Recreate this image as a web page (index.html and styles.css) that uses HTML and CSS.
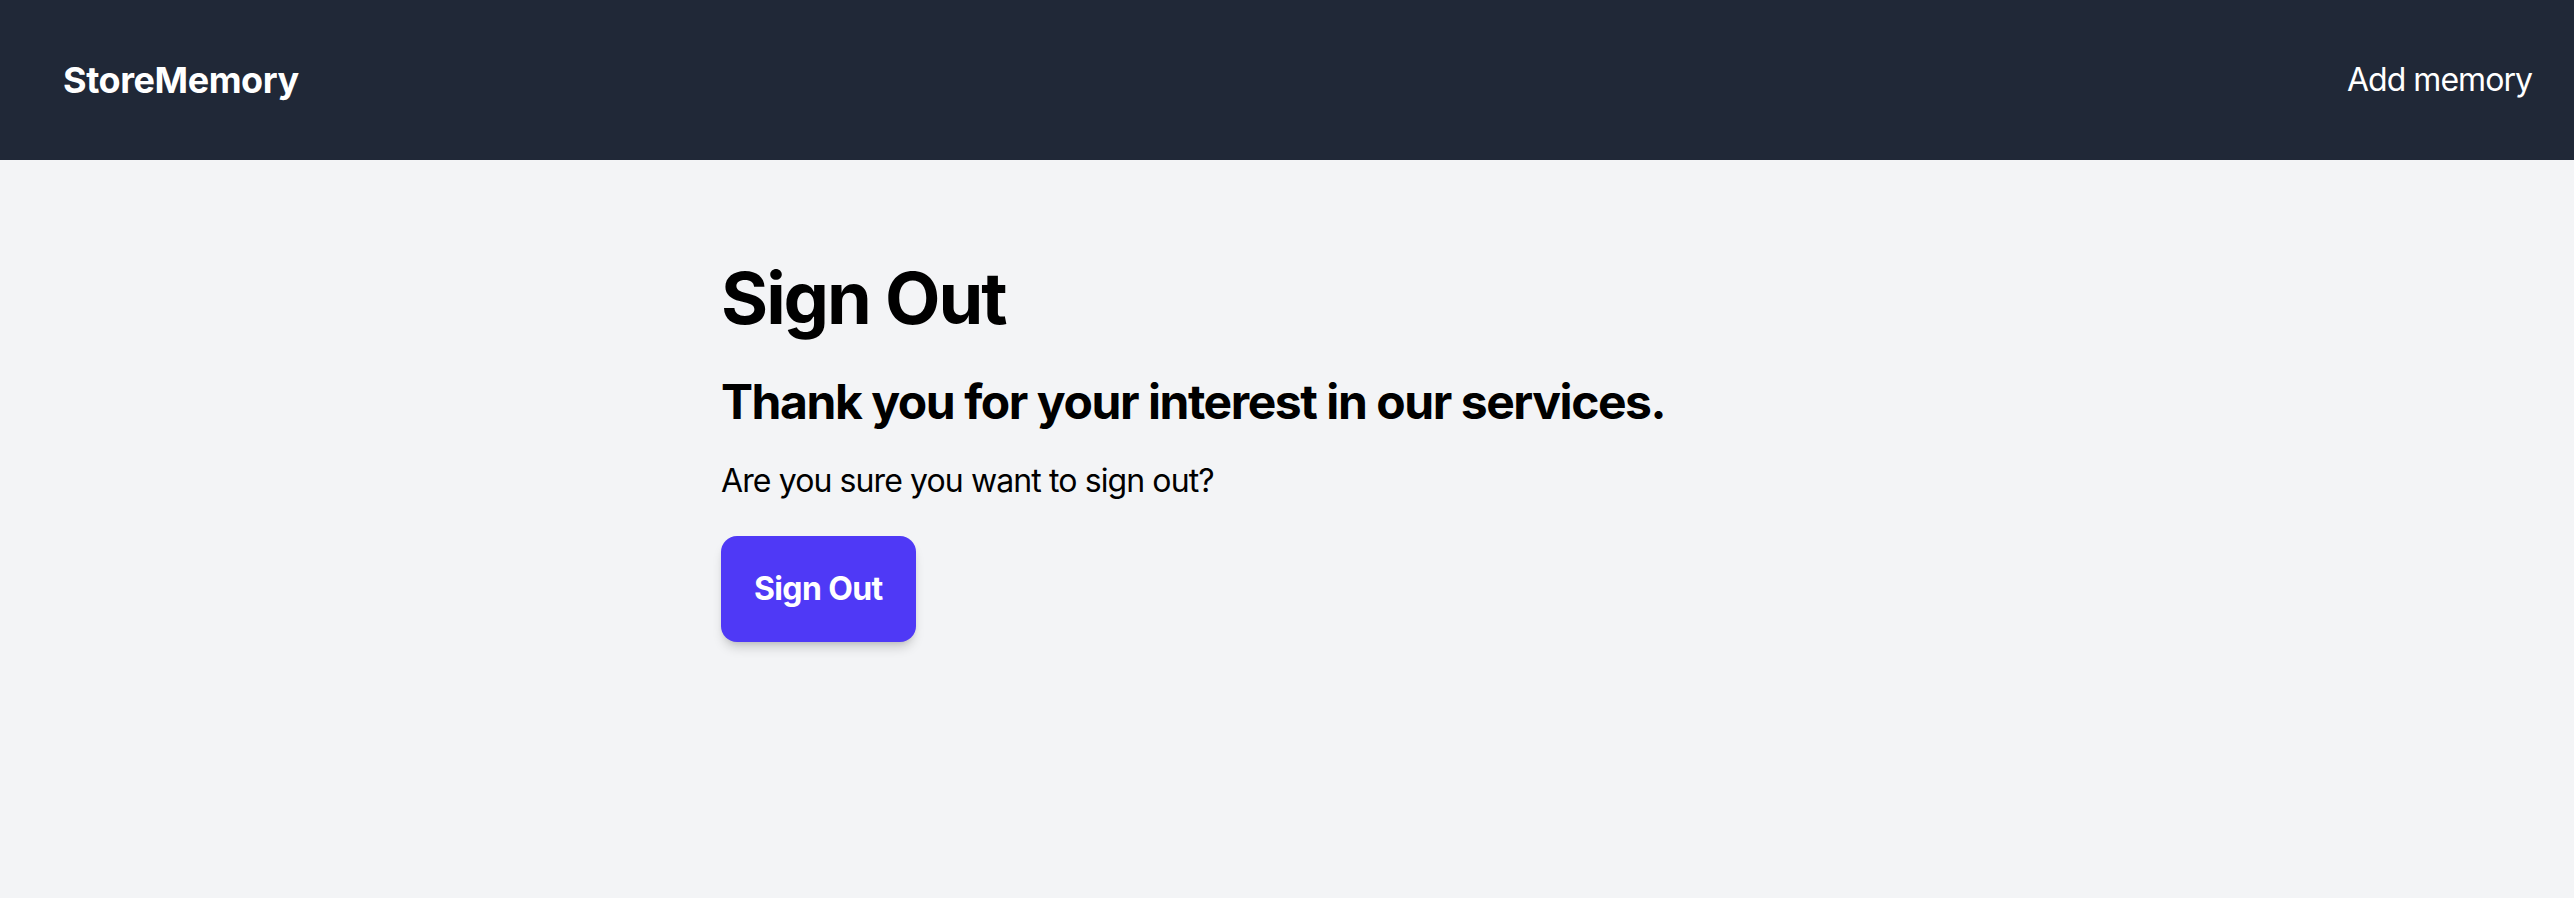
FILE: index.html
```html
<!DOCTYPE html>
<html lang="en">
<head>
<meta charset="utf-8">
<title>StoreMemory - Sign Out</title>
<link rel="stylesheet" href="styles.css">
</head>
<body>
  <header class="topbar">
    <a class="brand" href="#">StoreMemory</a>
    <nav class="nav">
      <a class="nav-link" href="#">Add memory</a>
    </nav>
  </header>
  <main class="main">
    <div class="container">
      <h1 class="title">Sign Out</h1>
      <h2 class="subtitle">Thank you for your interest in our services.</h2>
      <p class="question">Are you sure you want to sign out?</p>
      <button class="btn" type="button">Sign Out</button>
    </div>
  </main>
</body>
</html>
```

FILE: styles.css
```css
* { box-sizing: border-box; }

html, body {
  margin: 0;
  padding: 0;
}

body {
  font-family: Inter, "Noto Sans", "Liberation Sans", sans-serif;
  background: #f3f4f6;
  color: #000;
  min-height: 898px;
}

.topbar {
  height: 160px;
  background: #202837;
  display: flex;
  align-items: center;
  justify-content: space-between;
  padding: 0 42px 0 63px;
}

.brand {
  color: #fff;
  text-decoration: none;
  font-size: 36px;
  line-height: 54px;
  font-weight: 700;
  letter-spacing: -0.012em;
}

.nav {
  display: flex;
}

.nav-link {
  color: #fff;
  text-decoration: none;
  font-size: 32px;
  line-height: 48px;
  font-weight: 400;
  letter-spacing: -0.03em;
}

.main {
  padding-top: 102px;
}

.container {
  max-width: 1132px;
  margin: 0 auto;
}

.title {
  margin: 0;
  font-size: 72px;
  line-height: 72px;
  font-weight: 700;
  letter-spacing: -0.028em;
}

.subtitle {
  margin: 36px 0 0;
  font-size: 48px;
  line-height: 64px;
  font-weight: 700;
  letter-spacing: -0.03em;
}

.question {
  margin: 23px 0 0;
  font-size: 32px;
  line-height: 48px;
  letter-spacing: -0.028em;
}

.btn {
  margin-top: 31px;
  font-family: inherit;
  font-size: 32px;
  line-height: 48px;
  font-weight: 700;
  letter-spacing: -0.02em;
  color: #fff;
  background: #4f39f6;
  border: 0;
  border-radius: 16px;
  padding: 29px 33px;
  box-shadow: 0 8px 12px -3px rgba(0, 0, 0, 0.18), 0 3px 6px -3px rgba(0, 0, 0, 0.12);
  cursor: pointer;
}
```
